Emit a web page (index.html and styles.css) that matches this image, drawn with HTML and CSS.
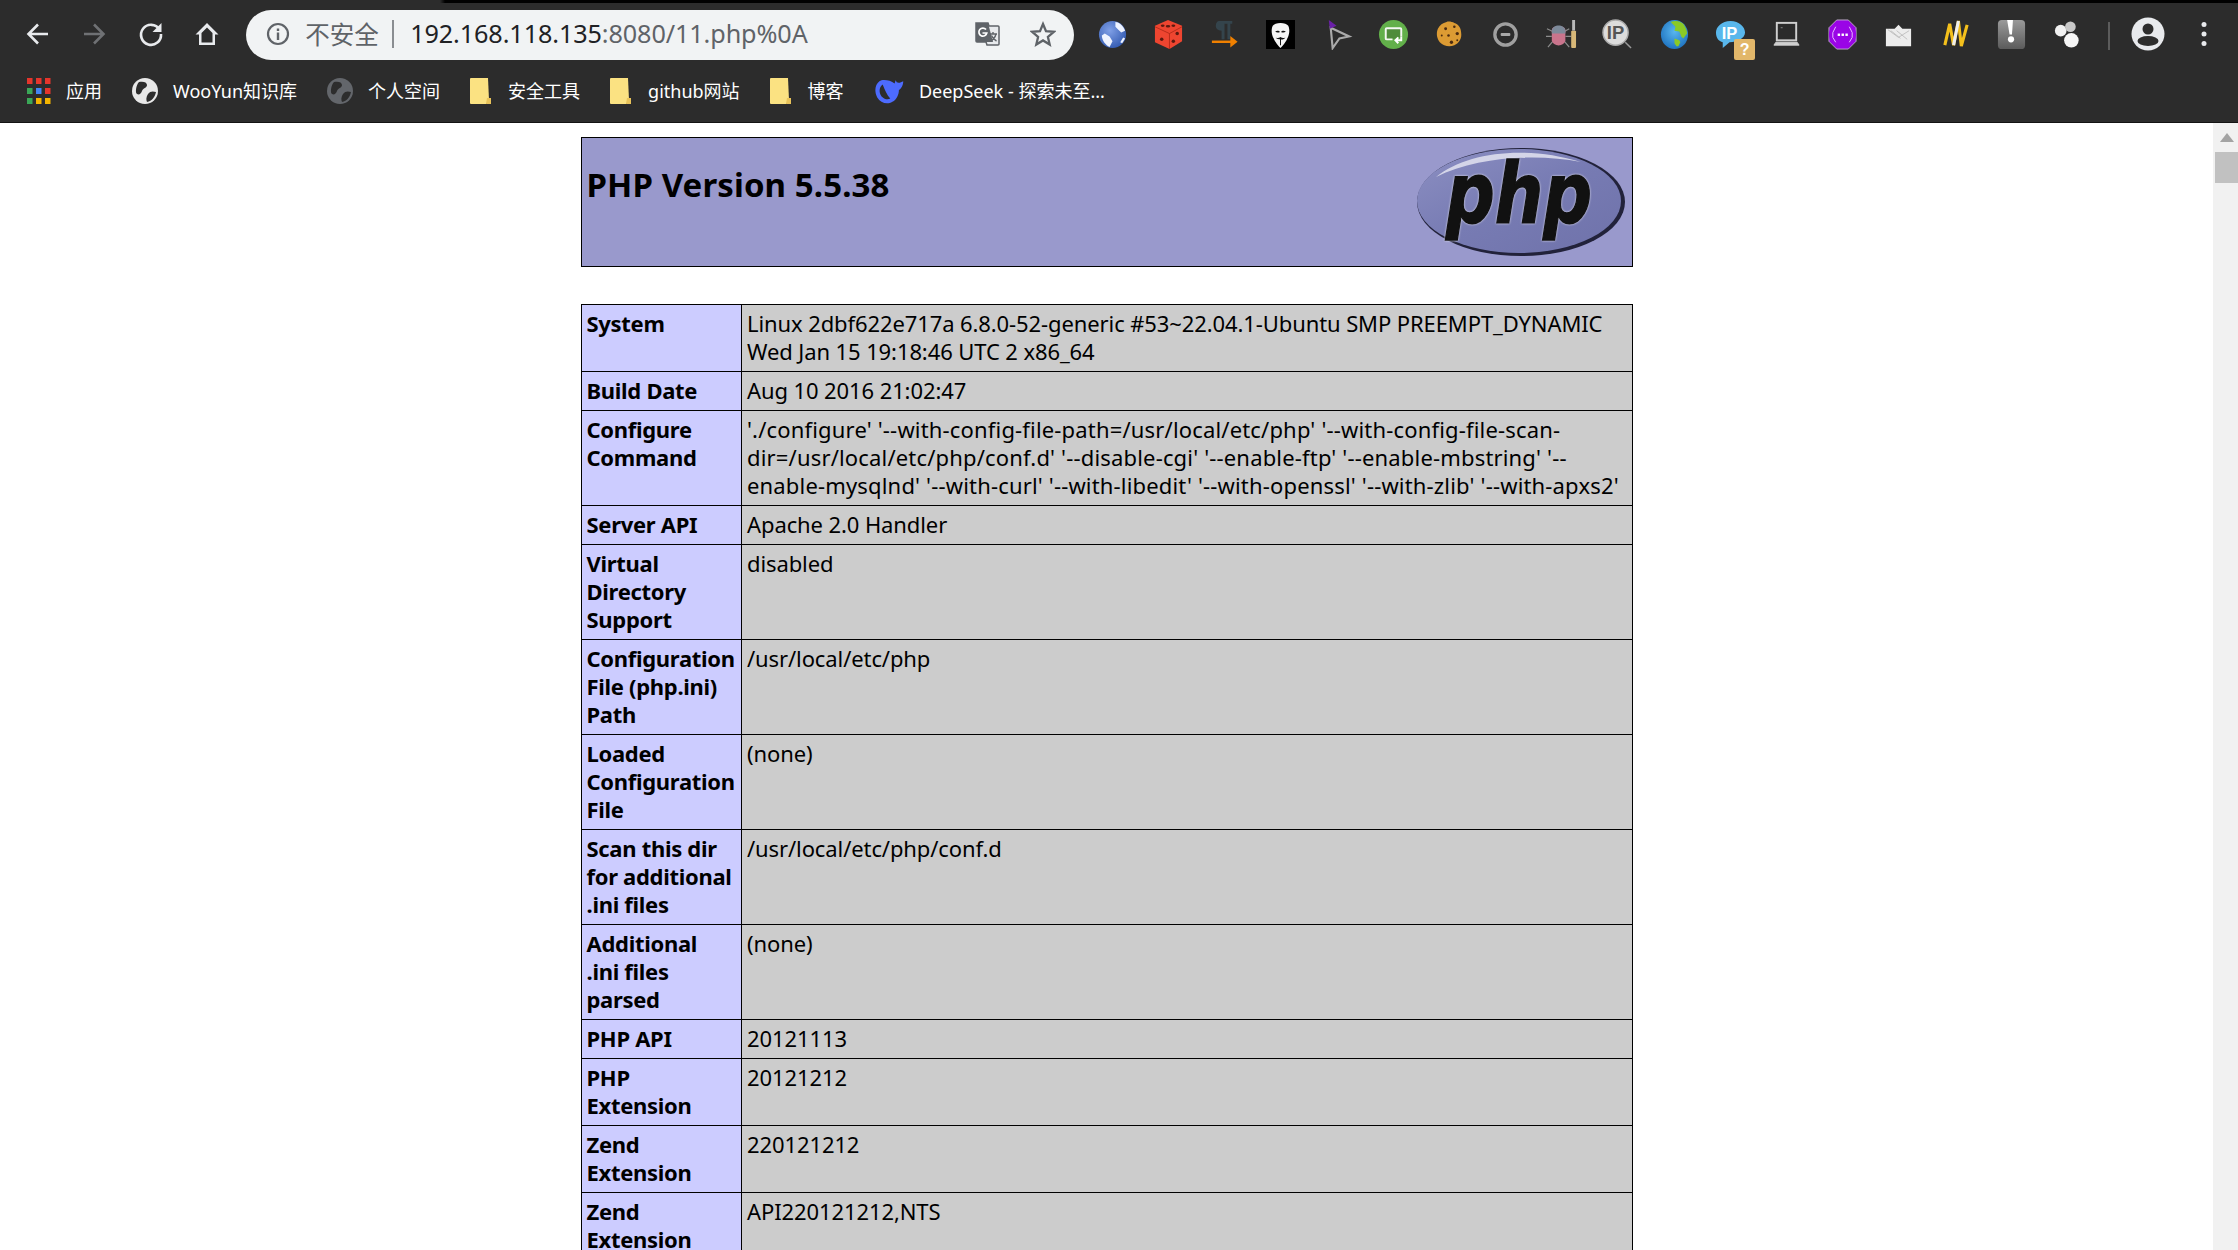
FILE: index.html
```html
<!DOCTYPE html>
<html lang="zh">
<head>
<meta charset="utf-8">
<title>phpinfo()</title>
<link rel="stylesheet" href="styles.css">
</head>
<body>
<header class="chrome">
  <div class="tabstrip"></div>
  <div class="toolbar">
    <nav class="nav">
      <span class="slot"><svg class="nav-icon" viewBox="0 0 28 28"><path d="M24 14H5M14 4.500 4.500 14l9.500 9.500" fill="none" stroke="#e8eaed" stroke-width="2.600"/></svg></span>
      <span class="slot"><svg class="nav-icon" viewBox="0 0 28 28"><path d="M4 14h19M14 4.500l9.500 9.500-9.500 9.500" fill="none" stroke="#6f7174" stroke-width="2.600"/></svg></span>
      <span class="slot"><svg class="nav-icon" viewBox="0 0 28 28"><path d="M22.500 9.500A10 10 0 1 0 24 14" fill="none" stroke="#e8eaed" stroke-width="2.600"/><path d="M24.500 3v9h-9z" fill="#e8eaed"/></svg></span>
      <span class="slot"><svg class="nav-icon" viewBox="0 0 28 28"><path d="M14 3 2.500 14.500H6V25h16V14.500h3.500zM8.500 22.500v-9.500L14 7.500l5.500 5.500v9.500z" fill="#e8eaed" fill-rule="evenodd"/></svg></span>
    </nav>
    <div class="omnibox">
      <svg class="info" viewBox="0 0 24 24"><circle cx="12" cy="12" r="10" fill="none" stroke="#5f6368" stroke-width="2.200"/><path d="M10.800 10.500h2.400V18h-2.400zM10.800 6.500h2.400v2.400h-2.400z" fill="#5f6368"/></svg>
      <span class="insecure">不安全</span>
      <span class="divider"></span>
      <span class="url"><span class="host">192.168.118.135</span>:8080/11.php%0A</span>
      <svg class="translate" viewBox="0 0 26 26"><path d="M2 2h12l1 3h9a1 1 0 0 1 1 1v17a1 1 0 0 1-1 1H13l-1-3H3a1 1 0 0 1-1-1z" fill="#e8eaed" stroke="#5f6368" stroke-width="1.500"/><path d="M2 2h12l5 19H3a1 1 0 0 1-1-1z" fill="#5f6368"/><path d="M12 8.500a4 4 0 1 0 .8 3.500H8.500" fill="none" stroke="#fff" stroke-width="1.700"/><path d="M16 13h7M19 11v2M22 13c-1 4-3 6-6 7M17.500 14.500c1 2.500 3 4.500 5 5.500" fill="none" stroke="#5f6368" stroke-width="1.400"/></svg>
      <svg class="star" viewBox="0 0 26 26"><path d="m13 3 3 7.200 7.800.6-5.900 5.100 1.800 7.600-6.700-4.100-6.700 4.100 1.800-7.600-5.900-5.100 7.800-.6z" fill="none" stroke="#5f6368" stroke-width="2.300"/></svg>
    </div>
    <div class="actions">
      <span class="slot"><svg class="ext" viewBox="0 0 32 32"><defs><radialGradient id="gb" cx=".4" cy=".35" r=".75"><stop offset="0" stop-color="#7f9fe6"/><stop offset="1" stop-color="#2d55ad"/></radialGradient></defs><circle cx="16" cy="16" r="14" fill="url(#gb)"/><path d="M19 3c3 0 8 3 10 9l-4 2-3-3-3-3zM8 15l5 3 3 5-3 6c-4-2-8-7-8-12zM27 19l2 1-3 5-2-1z" fill="#eef3ff"/></svg></span>
      <span class="slot"><svg class="ext" viewBox="0 0 32 32"><path d="M15.500 1 30 7v16l-13 8L2 24V7z" fill="#ee4530"/><path d="m2 8 15 7v16M30 8l-13 7" fill="none" stroke="#a82515" stroke-width=".8"/><g fill="#5c1a10"><ellipse cx="15.500" cy="7.500" rx="2.300" ry="1.300"/><ellipse cx="10" cy="7" rx="2" ry="1.200"/><ellipse cx="21" cy="7" rx="2" ry="1.200"/><circle cx="9" cy="21" r="1.800"/><circle cx="25" cy="15" r="1.800"/><circle cx="21" cy="23" r="1.800"/></g></svg></span>
      <span class="slot"><svg class="ext" viewBox="0 0 32 32"><path d="M10 2h14v3h-2v16h-3V5h-3v16h-3V12c-4 0-6-2-6-5s2-5 3-5z" fill="#34444c"/><path d="M3 23.500h23" stroke="#f08000" stroke-width="2.500"/><path d="m22 17.500 7.500 6-7.500 6z" fill="#f08000"/></svg></span>
      <span class="slot"><svg class="ext" viewBox="0 0 32 32"><path d="M1 1h30v30H1z" fill="#000"/><path d="M8 7c2-4 14-4 16 0 2 4 1 10-1 13-1 3-5 8-7 10-2-2-6-7-7-10-2-3-3-9-1-13z" fill="#f4f4f4"/><path d="M10.500 13c2-1.500 4-1 5 .5-2 .8-3.500.8-5-.5zM21.500 13c-2-1.500-4-1-5 .5 2 .8 3.500.8 5-.5zM11 19c2 1 3.500.5 5-.5 1.500 1 3 1.500 5 .5-1 2-3.500 2.500-5 2s-4 0-5-2zM15.500 21h1v6h-1z" fill="#111"/></svg></span>
      <span class="slot"><svg class="ext" viewBox="0 0 32 32"><path d="m9 9 19 9-10 2-7 10z" fill="none" stroke="#aaa" stroke-width="2.200"/><path d="M7 1l8 6-7 3z" fill="#6a1fa8"/></svg></span>
      <span class="slot"><svg class="ext" viewBox="0 0 32 32"><circle cx="16" cy="16" r="15" fill="#62b04a"/><path d="M8 22V10.500a1 1 0 0 1 1-1h14a1 1 0 0 1 1 1V19" fill="#4f8c3b"/><path d="M15 21H9a1 1 0 0 1-1-1V10.500a1 1 0 0 1 1-1h14a1 1 0 0 1 1 1V18" fill="none" stroke="#f4f8f2" stroke-width="2"/><path d="M24 18v4h-5M21 19l-3 3 3 3" fill="none" stroke="#fff" stroke-width="2"/></svg></span>
      <span class="slot"><svg class="ext" viewBox="0 0 32 32"><path d="M13 3c2-1 6 0 8 1 4 1 7 5 7 10 1 6-2 11-7 13-5 2-11 1-15-3-3-4-4-9-2-14 2-4 5-6 9-7z" fill="#dc9b33"/><g fill="#4a2a10"><circle cx="12" cy="10" r="1.500"/><circle cx="21" cy="8" r="1.300"/><circle cx="24" cy="15" r="1.700"/><circle cx="15" cy="17" r="1.300"/><circle cx="8" cy="17" r="1"/><circle cx="18" cy="24" r="1.700"/><circle cx="24" cy="22" r="1"/></g></svg></span>
      <span class="slot"><svg class="ext" viewBox="0 0 32 32"><circle cx="16" cy="16" r="11" fill="none" stroke="#a0a0a0" stroke-width="3.400"/><rect x="11" y="14.500" width="10" height="3" rx="1" fill="#a9a9a9"/></svg></span>
      <span class="slot"><svg class="ext" viewBox="0 0 32 32"><path d="M1 10l6 3M0 18h6M2 29l5-6M24 10l-5 3M26 18h-6M24 29l-5-6" stroke="#8d8d8d" stroke-width="1.200" fill="none"/><path d="M6 11c1-5 13-5 14 0v11c-1 7-13 7-14 0z" fill="#c9748c"/><path d="M6 12c1-7 13-7 14 0v3H6z" fill="#7d8a9a"/><path d="M27 1h3v11h-3z" fill="#b9b9b9"/><rect x="26" y="12" width="5" height="18" rx="1" fill="#d8b878"/></svg></span>
      <span class="slot"><svg class="ext" viewBox="0 0 32 32"><circle cx="14" cy="14" r="13" fill="#dcdcdc" stroke="#aaa" stroke-width="1.500"/><text class="ip-text" x="14" y="21" text-anchor="middle">IP</text><path d="m24 24 6 6" stroke="#999" stroke-width="1.500"/></svg></span>
      <span class="slot"><svg class="ext" viewBox="0 0 32 32"><defs><radialGradient id="ge" cx=".5" cy=".4" r=".7"><stop offset="0" stop-color="#58b6ef"/><stop offset="1" stop-color="#1769b8"/></radialGradient></defs><ellipse cx="16" cy="16" rx="14" ry="15" fill="url(#ge)"/><path d="M12 3c5-2 10-1 13 2 2 3 4 7 4 10l-4 5-2-2-2-5-5-1 1-4zM16 20l5 2 1 2-2 4h-2l-2-3z" fill="#8ac926"/></svg></span>
      <span class="slot slot-badge"><svg class="ext" viewBox="0 0 32 32"><path d="M16 2C7 2 1 8 1 14s3 9 7 10l0 6 7-6c8 0 16-4 16-10S25 2 16 2z" fill="#59b7ec"/><text class="bubble-text" x="15" y="21" text-anchor="middle">IP</text></svg><span class="badge">?</span></span>
      <span class="slot"><svg class="ext" viewBox="0 0 32 32"><rect x="6" y="4" width="20" height="18" fill="#2b2b2b" stroke="#cfcfcf" stroke-width="2"/><path d="M3 27l2-3h22l2 3z" fill="#cfcfcf" stroke="#cfcfcf"/><path d="M10 9h2" stroke="#888"/></svg></span>
      <span class="slot"><svg class="ext" viewBox="0 0 32 32"><path d="M10 1h12l8 8v14l-8 8H10l-8-8V9z" fill="#9a05e6" stroke="#bba8c8" stroke-width="1"/><circle cx="16" cy="16" r="14" fill="#9a05e6"/><rect x="11" y="15" width="2.500" height="2.500" fill="#fff"/><rect x="15" y="15" width="2.500" height="2.500" fill="#fff"/><rect x="19" y="15" width="2.500" height="2.500" fill="#fff"/><path d="M9 8l-3 6v5l3 5M23 8l3 6v5l-3 5" fill="none" stroke="#e8c0ff" stroke-width="1"/></svg></span>
      <span class="slot"><svg class="ext" viewBox="0 0 32 32"><path d="M3 10h9l4-4 4 4h9v18H3z" fill="#ececec"/><path d="m8 12 10 8M14 12l11 9M5 11l11 8 11-7" fill="none" stroke="#bbb" stroke-width=".9"/></svg></span>
      <span class="slot"><svg class="ext" viewBox="0 0 32 32"><path d="M5 27 10 5l4 22 5-25 3 26 6-22" fill="none" stroke="#f4c01c" stroke-width="3.200" stroke-linejoin="bevel"/><path d="M14 27l5-25" stroke="#eee" stroke-width="3.200"/></svg></span>
      <span class="slot"><svg class="ext" viewBox="0 0 32 32"><defs><linearGradient id="gx" x1="0" y1="0" x2="0" y2="1"><stop offset="0" stop-color="#9a9a9a"/><stop offset="1" stop-color="#5b5b5b"/></linearGradient></defs><rect x="2" y="1" width="28" height="30" rx="4" fill="url(#gx)"/><path d="M11.500 1h6l-1 15h-2.500z" fill="#fff"/><circle cx="15.500" cy="21" r="3.200" fill="#fff"/></svg></span>
      <span class="slot"><svg class="ext ext-soft" viewBox="0 0 32 32"><circle cx="9" cy="12" r="6" fill="#f1f1f1"/><circle cx="19" cy="8" r="5.500" fill="#c9c9c9"/><circle cx="20" cy="22" r="7.500" fill="#f6f6f6"/></svg></span>
    </div>
    <span class="toolbar-sep"></span>
    <span class="slot"><svg class="avatar" viewBox="0 0 34 34"><circle cx="17" cy="17" r="16.500" fill="#e8eaed"/><circle cx="17" cy="12" r="5.500" fill="#2d2d2d"/><ellipse cx="17" cy="24" rx="10.500" ry="5" fill="#2d2d2d"/></svg></span>
    <span class="slot"><svg class="menu" viewBox="0 0 8 28"><circle cx="4" cy="4.500" r="2.500" fill="#e8eaed"/><circle cx="4" cy="14" r="2.500" fill="#e8eaed"/><circle cx="4" cy="23.500" r="2.500" fill="#e8eaed"/></svg></span>
  </div>
  <div class="bookmarks">
    <a class="bm"><svg class="bm-icon" viewBox="0 0 24 26"><g fill="#e5352c"><rect width="5.500" height="6"/><rect x="9" width="5.500" height="6"/><rect x="18" width="5.500" height="6"/></g><rect y="10" width="5.500" height="6" fill="#3aa757"/><rect x="9" y="10" width="5.500" height="6" fill="#4285f4"/><rect x="18" y="10" width="5.500" height="6" fill="#e5352c"/><rect y="20" width="5.500" height="6" fill="#3aa757"/><rect x="9" y="20" width="5.500" height="6" fill="#f4b400"/><rect x="18" y="20" width="5.500" height="6" fill="#f4b400"/></svg>应用</a>
    <a class="bm"><svg class="bm-icon" viewBox="0 0 26 26"><circle cx="13" cy="13" r="13" fill="#e8e8e8"/><path d="M7 4c4-1 8 0 8 3s-4 3-5 6-3 4-5 3-1-9 2-12zM24 14c-3-1-6-1-8 2s-2 6-1 8c5-1 8-5 9-10z" fill="#2d2d2d"/></svg>WooYun知识库</a>
    <a class="bm"><svg class="bm-icon" viewBox="0 0 26 26"><circle cx="13" cy="13" r="13" fill="#63666b"/><path d="M7 4c4-1 8 0 8 3s-4 3-5 6-3 4-5 3-1-9 2-12zM24 14c-3-1-6-1-8 2s-2 6-1 8c5-1 8-5 9-10z" fill="#2d2d2d"/></svg>个人空间</a>
    <a class="bm bm-folder"><svg class="bm-icon" viewBox="0 0 21 26"><path d="M0 1a1 1 0 0 1 1-1h17l1 22-3 4H1a1 1 0 0 1-1-1z" fill="#fbe282"/><path d="M17 20h4v6h-5z" fill="#e9c35a"/></svg>安全工具</a>
    <a class="bm bm-folder"><svg class="bm-icon" viewBox="0 0 21 26"><path d="M0 1a1 1 0 0 1 1-1h17l1 22-3 4H1a1 1 0 0 1-1-1z" fill="#fbe282"/><path d="M17 20h4v6h-5z" fill="#e9c35a"/></svg>github网站</a>
    <a class="bm bm-folder"><svg class="bm-icon" viewBox="0 0 21 26"><path d="M0 1a1 1 0 0 1 1-1h17l1 22-3 4H1a1 1 0 0 1-1-1z" fill="#fbe282"/><path d="M17 20h4v6h-5z" fill="#e9c35a"/></svg>博客</a>
    <a class="bm"><svg class="bm-icon" viewBox="0 0 28 24"><path d="M27 3c-2 1-4 2-6 1l-1-2-1 3C15 2 8 1 5 3 1 6 0 12 3 18c3 5 9 7 14 4 4-2 6-7 6-11 2-1 4-4 4-8z" fill="#4d6bfe"/><path d="M8 6c-3 2-4 7-1 11 3 3 6 3 8 2-3-3-5-8-7-13z" fill="#2d2d2d"/></svg>DeepSeek - 探索未至...</a>
  </div>
</header>
<div class="viewport">
  <main class="page">
    <div class="php-head">
      <h1 class="php-title">PHP Version 5.5.38</h1>
      <svg class="php-logo" viewBox="0 0 210 110">
        <defs><linearGradient id="lg" x1="0" y1="0" x2="1" y2="1"><stop offset="0" stop-color="#8c8fc2"/><stop offset=".5" stop-color="#777bb3"/><stop offset="1" stop-color="#6f72aa"/></linearGradient></defs>
        <ellipse cx="105" cy="55" rx="104" ry="54" fill="#22223a"/>
        <ellipse cx="103" cy="54" rx="102" ry="52" fill="url(#lg)"/>
        <path d="M20 30C50 5 110-2 165 15 120 6 60 10 20 30z" fill="#d4d5e8"/>
        <text class="logo-text" x="103" y="76" text-anchor="middle" textLength="146" lengthAdjust="spacingAndGlyphs">php</text>
      </svg>
    </div>
    <table class="info-table">
      <colgroup><col class="col-key"><col></colgroup>
      <tr><th>System</th><td>Linux 2dbf622e717a 6.8.0-52-generic #53~22.04.1-Ubuntu SMP PREEMPT_DYNAMIC<br>Wed Jan 15 19:18:46 UTC 2 x86_64</td></tr>
      <tr><th>Build Date</th><td>Aug 10 2016 21:02:47</td></tr>
      <tr><th>Configure<br>Command</th><td class="cmd">'./configure' '--with-config-file-path=/usr/local/etc/php' '--with-config-file-scan-<br>dir=/usr/local/etc/php/conf.d' '--disable-cgi' '--enable-ftp' '--enable-mbstring' '--<br>enable-mysqlnd' '--with-curl' '--with-libedit' '--with-openssl' '--with-zlib' '--with-apxs2'</td></tr>
      <tr><th>Server API</th><td>Apache 2.0 Handler</td></tr>
      <tr><th>Virtual<br>Directory<br>Support</th><td>disabled</td></tr>
      <tr><th>Configuration<br>File (php.ini)<br>Path</th><td>/usr/local/etc/php</td></tr>
      <tr><th>Loaded<br>Configuration<br>File</th><td>(none)</td></tr>
      <tr><th>Scan this dir<br>for additional<br>.ini files</th><td>/usr/local/etc/php/conf.d</td></tr>
      <tr><th>Additional<br>.ini files<br>parsed</th><td>(none)</td></tr>
      <tr><th>PHP API</th><td>20121113</td></tr>
      <tr><th>PHP<br>Extension</th><td>20121212</td></tr>
      <tr><th>Zend<br>Extension</th><td>220121212</td></tr>
      <tr><th>Zend<br>Extension<br>Build</th><td>API220121212,NTS</td></tr>
    </table>
  </main>
  <aside class="scrollbar">
    <span class="scroll-up"></span>
    <span class="scroll-thumb"></span>
  </aside>
</div>
</body>
</html>
```
FILE: styles.css
```css
* { box-sizing: border-box; }
html, body { margin: 0; height: 100%; overflow: hidden; background: #fff; }
body { width: 2238px; height: 1250px; display: flex; flex-direction: column; font-family: "Noto Sans", "Noto Sans CJK SC", sans-serif; }

.chrome { height: 123px; background: #2c2c2c; border-bottom: 1px solid #141414; flex: none; }
.tabstrip { height: 3px; background: linear-gradient(90deg, #2c2c2c 0, #2c2c2c 440px, #000 445px); }
.toolbar { height: 67px; padding: 7px 0 0 10px; display: flex; align-items: flex-start; }
.nav { display: flex; }
.slot { position: relative; width: 56.2px; height: 50px; flex: none; display: flex; align-items: center; justify-content: center; }
.nav .slot { width: 56.3px; margin-top: -1px; }
.nav-icon { width: 28px; height: 28px; }

.omnibox { width: 828px; height: 50px; margin-left: 11px; border-radius: 25px; background: #f1f3f4; display: flex; align-items: center; padding: 0 0 2px 20px; color: #5f6368; flex: none; }
.info { width: 24px; height: 24px; flex: none; }
.insecure { margin-left: 15px; font: 24.500px/1 "Noto Sans CJK SC", sans-serif; width: 75px; white-space: nowrap; }
.divider { width: 2px; height: 28px; background: #8a8d91; margin-left: 12px; }
.url { margin-left: 16px; font: 25.200px/1 "Noto Sans", sans-serif; white-space: nowrap; color: #5f6368; letter-spacing: -.1px; }
.host { color: #202124; }
.translate { width: 26px; height: 26px; margin-left: auto; flex: none; }
.star { width: 26px; height: 26px; margin: 0 18px 0 30px; flex: none; }

.actions { display: flex; margin-left: 10px; flex: none; }
.actions .slot { margin-top: 1px; height: 50px; }
.ext { width: 31px; height: 31px; display: block; margin-top: -4px; }
.ext-soft { filter: blur(.7px); }
.ip-text { font: 700 19px "Liberation Sans", sans-serif; fill: #555; }
.bubble-text { font: 700 17px "Liberation Sans", sans-serif; fill: #fff; }
.badge { position: absolute; left: 32px; top: 28px; width: 21px; height: 21px; border-radius: 2px; background: #e2b76a; color: #fff; font: 700 16px/21px "Liberation Sans", sans-serif; text-align: center; }
.toolbar-sep { width: 2px; height: 28px; margin: 12px 10px 0 12px; background: #5c5c5c; flex: none; }
.avatar { width: 34px; height: 34px; margin-top: -2px; }
.menu { width: 8px; height: 28px; margin-top: -2px; }

.bookmarks { height: 52px; padding: 0 0 10px 27px; display: flex; align-items: center; gap: 30px; }
.bm { display: flex; align-items: center; gap: 15px; color: #fff; font: 18px/1 "Noto Sans", "Noto Sans CJK SC", sans-serif; white-space: nowrap; }
.bm-folder { gap: 17px; }
.bm-icon { height: 26px; width: auto; flex: none; }

.viewport { flex: 1; display: flex; min-height: 0; overflow: hidden; }
.page { flex: 1; min-width: 0; padding-top: 14px; display: flex; flex-direction: column; align-items: center; overflow: hidden; }

.php-head { width: 1052px; height: 130px; flex: none; background: #9999cc; border: 1px solid #000; display: flex; justify-content: space-between; padding: 0 6px 0 5px; margin-bottom: 37px; }
.php-title { margin: 27px 0 0; font-size: 33px; line-height: 40px; font-weight: 700; color: #000; letter-spacing: .1px; }
.php-logo { width: 210px; height: 110px; align-self: center; }
.logo-text { font: italic 700 84px "DejaVu Sans", sans-serif; fill: #111; stroke: #111; stroke-width: 1.500px; filter: drop-shadow(0 0 1px #e6e6f0); }

.info-table { width: 1052px; table-layout: fixed; border-collapse: collapse; flex: none; font-size: 22px; line-height: 28px; color: #000; }
.col-key { width: 160px; }
.info-table th, .info-table td { border: 1px solid #000; padding: 4px 5px 6px; text-align: left; vertical-align: baseline; white-space: nowrap; }
.info-table th { background: #ccccff; font-weight: 700; letter-spacing: -.3px; }
.info-table td { background: #cccccc; font-weight: 400; letter-spacing: -.1px; padding-left: 5.500px; }
.info-table td.cmd { letter-spacing: .17px; }

.scrollbar { width: 25px; flex: none; background: #f1f1f1; position: relative; padding-left: 2px; }
.scroll-up { position: absolute; left: 7px; top: 10px; width: 0; height: 0; border: 7px solid transparent; border-top: 0; border-bottom: 9px solid #a3a3a3; }
.scroll-thumb { display: block; margin-top: 29px; height: 31px; background: #c1c1c1; }
```
